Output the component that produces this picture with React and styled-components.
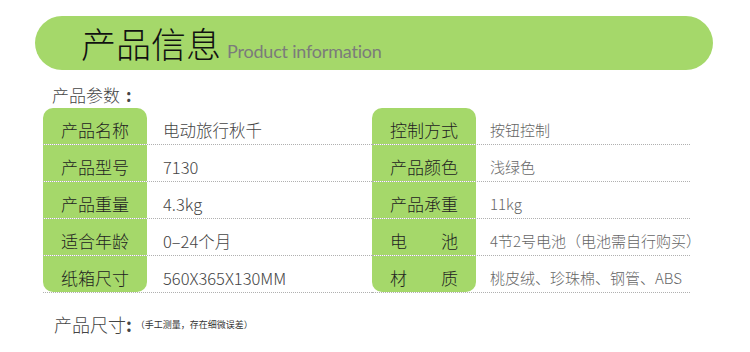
import React from "react";
import styled, { createGlobalStyle } from "styled-components";

const GlobalStyle = createGlobalStyle`
  html, body {
    margin: 0;
    padding: 0;
    background: #fff;
  }
  body {
    font-family: "Noto Sans CJK SC", "Liberation Sans", sans-serif;
  }
`;

const GREEN = "#a5d86a";

const Page = styled.div`
  width: 750px;
  height: 352px;
  overflow: hidden;
  background: #fff;
`;

const Header = styled.div`
  margin: 16px 37px 0 35px;
  height: 54px;
  border-radius: 27px;
  background: ${GREEN};
  display: flex;
  align-items: baseline;
  padding-left: 46px;
  box-sizing: border-box;
`;

const Title = styled.h1`
  margin: 0;
  font-size: 35px;
  line-height: 54px;
  font-weight: 300;
  color: #111;
`;

const Subtitle = styled.span`
  margin-left: 6px;
  font-family: Lato, "Open Sans", sans-serif;
  font-size: 18px;
  color: #7b7b7b;
  letter-spacing: -0.2px;
`;

const SectionTitle = styled.div`
  margin: ${(p) => p.$top}px 0 0 ${(p) => p.$left}px;
  font-size: ${(p) => p.$size}px;
  line-height: 20px;
  font-weight: 300;
  color: #444;
  display: flex;
  align-items: center;
`;

const Colon = styled.span`
  margin-left: ${(p) => p.$gap}px;
  font-weight: 700;
`;

const Note = styled.span`
  margin-left: 4px;
  font-size: 9px;
  font-weight: 400;
  color: #333;
  padding-top: 2px;
`;

const Tables = styled.div`
  margin-top: 3px;
  padding-left: 43px;
  display: grid;
  grid-template-columns: 329px 318px;
`;

const Table = styled.div`
  display: flex;
  flex-direction: column;
`;

const Row = styled.div`
  display: grid;
  grid-template-columns: 104px 1fr;
  height: 37px;
  box-sizing: border-box;
  border-bottom: 1px dotted #b0b0b0;
`;

const Label = styled.div`
  background: ${GREEN};
  display: flex;
  justify-content: center;
  align-items: center;
  padding-top: 8px;
  box-sizing: border-box;
  border-radius: ${(p) =>
    p.$first ? "10px 10px 0 0" : p.$last ? "0 0 10px 10px" : "0"};
`;

const LabelText = styled.div`
  width: 68px;
  display: flex;
  justify-content: space-between;
  font-size: 17px;
  line-height: 20px;
  font-weight: 300;
  color: #222;
`;

const Value = styled.div`
  display: flex;
  align-items: center;
  padding: 8px 0 0 ${(p) => p.$indent}px;
  box-sizing: border-box;
  font-size: ${(p) => p.$size}px;
  line-height: 20px;
  font-weight: 300;
  color: ${(p) => p.$color};
  white-space: nowrap;
`;

const leftRows = [
  ["产品名称", "电动旅行秋千"],
  ["产品型号", "7130"],
  ["产品重量", "4.3kg"],
  ["适合年龄", "0–24个月"],
  ["纸箱尺寸", "560X365X130MM"],
];

const rightRows = [
  ["控制方式", "按钮控制"],
  ["产品颜色", "浅绿色"],
  ["产品承重", "11kg"],
  ["电池", "4节2号电池（电池需自行购买）"],
  ["材质", "桃皮绒、珍珠棉、钢管、ABS"],
];

const SpecTable = ({ rows, indent, size, color }) => (
  <Table>
    {rows.map(([label, value], i) => (
      <Row key={label}>
        <Label $first={i === 0} $last={i === rows.length - 1}>
          <LabelText>
            {label.split("").map((c, j) => (
              <span key={j}>{c}</span>
            ))}
          </LabelText>
        </Label>
        <Value $indent={indent} $size={size} $color={color}>
          {value}
        </Value>
      </Row>
    ))}
  </Table>
);

const App = () => (
  <Page>
    <GlobalStyle />
    <Header>
      <Title>产品信息</Title>
      <Subtitle>Product information</Subtitle>
    </Header>
    <SectionTitle $top={15} $left={52} $size={17}>
      产品参数<Colon $gap={6}>:</Colon>
    </SectionTitle>
    <Tables>
      <SpecTable rows={leftRows} indent={16} size={16.5} color="#444" />
      <SpecTable rows={rightRows} indent={14} size={15} color="#666" />
    </Tables>
    <SectionTitle $top={20} $left={54} $size={18}>
      产品尺寸<Colon $gap={0}>:</Colon>
      <Note>（手工测量，存在细微误差）</Note>
    </SectionTitle>
  </Page>
);

export default App;
